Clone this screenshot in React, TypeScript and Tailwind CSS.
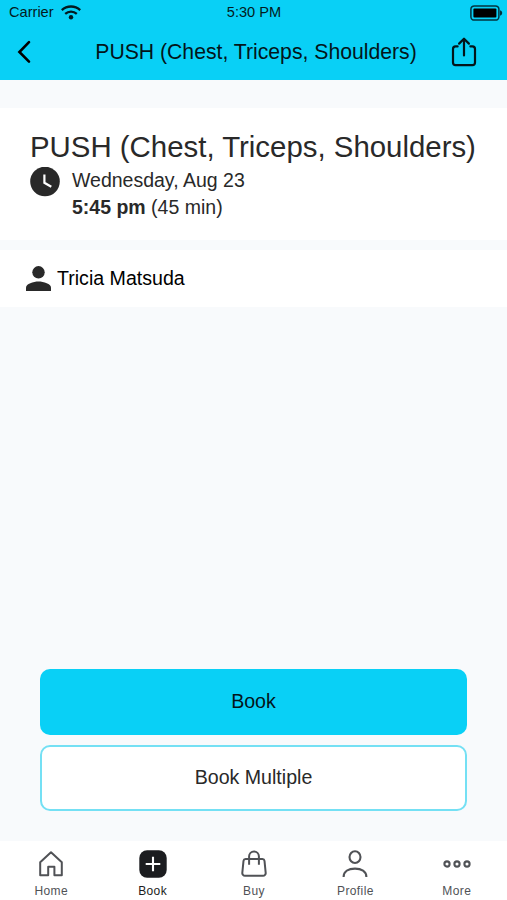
import React from 'react';

const WifiIcon = () => (
  <svg width="20" height="15" viewBox="0 0 20 15" fill="none" stroke="#031a20" strokeWidth="2.3">
    <path d="M.8 5.1C6 .3 14 .3 19.2 5.1" />
    <path d="M4.2 8.8c3.3-3 8.3-3 11.6 0" />
    <circle cx="10" cy="12.3" r="2.2" fill="#031a20" stroke="none" />
  </svg>
);

const BatteryIcon = () => (
  <svg width="33" height="16" viewBox="0 0 33 16">
    <rect x=".9" y=".9" width="28" height="14.2" rx="3.4" fill="none" stroke="#03333f" strokeWidth="1.5" />
    <rect x="3.4" y="3.4" width="23" height="9.2" rx="1" fill="#000" />
    <path d="M30 5.3c2.9.6 2.9 4.8 0 5.4z" fill="#03333f" />
  </svg>
);

const BackIcon = () => (
  <svg width="14" height="24" viewBox="0 0 14 24" fill="none" stroke="#000" strokeWidth="2.6">
    <path d="M12 2.2 2.4 12l9.6 9.6" strokeLinecap="round" />
  </svg>
);

const ShareIcon = () => (
  <svg width="26" height="30" viewBox="0 0 26 30" fill="none" stroke="#03151a" strokeWidth="2.2" strokeLinecap="round" strokeLinejoin="round">
    <path d="M6.6 9.4H4.6A2.6 2.6 0 0 0 2 12v13.6a2.6 2.6 0 0 0 2.6 2.6h16.8a2.6 2.6 0 0 0 2.6-2.6V12a2.6 2.6 0 0 0-2.6-2.6h-2" />
    <path d="M13 18.4V2M8.1 6.6 13 1.7l4.9 4.9" />
  </svg>
);

const ClockIcon = () => (
  <svg width="30" height="30" viewBox="0 0 30 30">
    <circle cx="15" cy="14.5" r="14.8" fill="#292929" />
    <path d="M14.4 7.4v8.4l6.9 4" fill="none" stroke="#fff" strokeWidth="2.2" />
  </svg>
);

const PersonIcon = () => (
  <svg width="25" height="25" viewBox="0 0 25 25" fill="#292929">
    <circle cx="12.5" cy="6.3" r="6.2" />
    <path d="M0 25v-3.4c0-3.7 7.3-6.1 12.5-6.1S25 17.9 25 21.6V25z" />
  </svg>
);

const HomeIcon = () => (
  <svg width="28" height="28" viewBox="0 0 28 28" fill="none" stroke="#505256" strokeWidth="2" strokeLinejoin="round">
    <path d="M3.2 12.3 14 2.2l10.8 10.1v12.9h-7.4v-8.4h-6.2v8.4h-8z" />
  </svg>
);

const BookIcon = () => (
  <svg width="28" height="28" viewBox="0 0 28 28">
    <rect x=".3" y=".3" width="27.4" height="27.4" rx="7.8" fill="#1c1d20" />
    <path d="M14 6.7v14.6M6.7 14h14.6" stroke="#fff" strokeWidth="2.1" />
  </svg>
);

const BagIcon = () => (
  <svg width="28" height="28" viewBox="0 0 28 28" fill="none" stroke="#505256" strokeWidth="2" strokeLinejoin="round">
    <path d="M5.6 9h16.8a2.2 2.2 0 0 1 2.1 1.9l1.2 11.9a2.7 2.7 0 0 1-2.7 3H5a2.7 2.7 0 0 1-2.7-3l1.2-11.9A2.2 2.2 0 0 1 5.6 9z" />
    <path d="M9.1 14.8V6.3a4.9 4.9 0 0 1 9.8 0v8.5" />
  </svg>
);

const ProfileIcon = () => (
  <svg width="28" height="28" viewBox="0 0 28 28" fill="none" stroke="#505256" strokeWidth="2.1">
    <ellipse cx="14" cy="7.1" rx="5.5" ry="5.9" />
    <path d="M2.6 26.9c0-5.7 5.1-8.3 11.4-8.3s11.4 2.6 11.4 8.3" />
  </svg>
);

const MoreIcon = () => (
  <svg width="28" height="28" viewBox="0 0 28 28" fill="none" stroke="#505256" strokeWidth="2.1">
    <circle cx="4" cy="14" r="2.6" />
    <circle cx="14" cy="14" r="2.6" />
    <circle cx="24" cy="14" r="2.6" />
  </svg>
);

const tabs = [
  { label: 'Home', icon: HomeIcon },
  { label: 'Book', icon: BookIcon, active: true },
  { label: 'Buy', icon: BagIcon },
  { label: 'Profile', icon: ProfileIcon },
  { label: 'More', icon: MoreIcon },
];

const TabBar = () => (
  <nav className="flex h-[59px] bg-white">
    {tabs.map(({ label, icon: Icon, active }) => (
      <button key={label} className="flex flex-1 flex-col items-center pt-[9px] pl-px">
        <Icon />
        <span
          className={`mt-[5px] text-[12px] leading-4 tracking-[0.4px] ${
            active ? 'text-[#1c1d20]' : 'text-[#505256]'
          }`}
        >
          {label}
        </span>
      </button>
    ))}
  </nav>
);

const App: React.FC = () => {
  return (
    <div className="flex h-[900px] w-[507px] flex-col overflow-hidden bg-[#f8fafc] font-['Liberation_Sans',Arial,sans-serif]">
      <header className="h-20 bg-[#09d0f6]">
        <div className="grid h-[25px] grid-cols-3 items-center pr-[4px] pl-[9px] text-[14.6px] text-[#031a20]">
          <div className="flex items-center gap-[7px]">
            <span className="pt-px">Carrier</span>
            <WifiIcon />
          </div>
          <span className="pr-[4px] text-center">5:30 PM</span>
          <div className="flex justify-end">
            <BatteryIcon />
          </div>
        </div>
        <div className="flex h-[55px] items-center pr-[30px] pb-px pl-[17px]">
          <BackIcon />
          <h1 className="flex-1 pl-[30px] text-center text-[21.2px] whitespace-nowrap text-[#03151a]">
            PUSH (Chest, Triceps, Shoulders)
          </h1>
          <ShareIcon />
        </div>
      </header>

      <section className="mt-7 h-[132px] bg-white pt-[22px] pl-[30px] text-[#292929]">
        <h2 className="text-[29.4px] leading-[34px] whitespace-nowrap">PUSH (Chest, Triceps, Shoulders)</h2>
        <div className="flex gap-3 pt-[3px]">
          <ClockIcon />
          <div className="text-[19.5px] leading-[27px]">
            <p>Wednesday, Aug 23</p>
            <p>
              <b>5:45 pm</b> (45 min)
            </p>
          </div>
        </div>
      </section>

      <section className="mt-[10px] flex h-[57px] items-center gap-[6px] bg-white pl-[26px]">
        <PersonIcon />
        <span className="text-[19.6px] text-black">Tricia Matsuda</span>
      </section>

      <div className="mt-auto flex flex-col gap-[10px] px-10 pb-[30px]">
        <button className="h-[66px] rounded-[10px] bg-[#09d0f6] text-[19.6px] text-[#03151a]">Book</button>
        <button className="h-[66px] rounded-[10px] border-2 border-[#74e0f4] bg-white text-[19.6px] text-[#292929]">
          Book Multiple
        </button>
      </div>

      <TabBar />
    </div>
  );
};

export default App;
